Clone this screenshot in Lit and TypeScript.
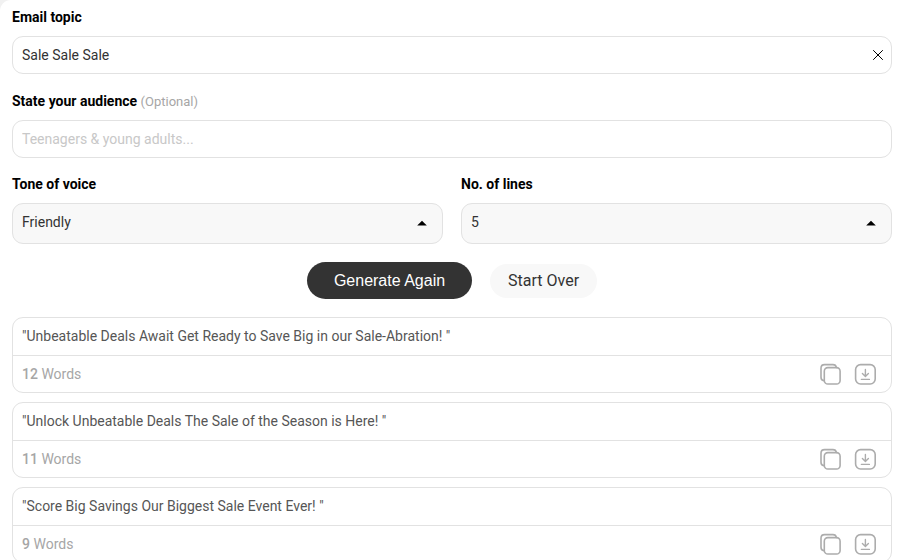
import { LitElement, html, css } from "lit";
import { customElement, property, state } from "lit/decorators.js";

@customElement("result-card")
class ResultCard extends LitElement {
  @property() text = "";
  @property({ type: Number }) words = 0;

  static styles = css`
    :host {
      display: block;
      border: 1px solid #e2e2e2;
      border-radius: 11px;
      background: #fff;
    }
    .text {
      margin: 0;
      padding: 8px 9px 9px;
      line-height: 20px;
      color: #565656;
      border-bottom: 1px solid #e2e2e2;
      white-space: pre-wrap;
    }
    .footer {
      display: flex;
      align-items: center;
      justify-content: space-between;
      height: 36px;
      padding: 0 14px 0 9px;
      color: #a6a6a6;
    }
    .count {
      font-weight: 500;
    }
    .actions {
      display: flex;
      gap: 12px;
    }
    .icon {
      display: block;
      width: 23px;
      height: 23px;
      padding: 0;
      border: 0;
      background: none;
      color: #acacac;
      cursor: pointer;
    }
    svg {
      display: block;
      fill: none;
      stroke: currentColor;
      stroke-width: 1.6;
      stroke-linecap: round;
      stroke-linejoin: round;
    }
  `;

  render() {
    return html`
      <p class="text">${this.text}</p>
      <div class="footer">
        <span><b class="count">${this.words}</b> Words</span>
        <div class="actions">
          <button class="icon" aria-label="Copy">
            <svg width="23" height="23" viewBox="0 0 23 23">
              <rect x="5.3" y="4.6" width="15.8" height="16.4" rx="3.6" />
              <path d="M4.8 17.6C2.9 17.4 2 16.5 2 14.2V5.2C2 2.7 3.2 1.6 5.6 1.6H14C16 1.6 17 2.6 17.4 4.4" />
            </svg>
          </button>
          <button class="icon" aria-label="Download">
            <svg width="23" height="23" viewBox="0 0 23 23">
              <rect x="1.6" y="1.6" width="19.6" height="19.4" rx="5" />
              <path d="M11.4 6.4V13.2M8.4 10.6L11.4 13.5L14.4 10.6M7.4 16.4H15.4" stroke-width="1.4" />
            </svg>
          </button>
        </div>
      </div>
    `;
  }
}

@customElement("app-root")
class AppRoot extends LitElement {
  @state() private topic = "Sale Sale Sale";

  private results = [
    { text: '"Unbeatable Deals Await Get Ready to Save Big in our Sale-Abration! "', words: 12 },
    { text: '"Unlock Unbeatable Deals The Sale of the Season is Here! "', words: 11 },
    { text: '"Score Big Savings Our Biggest Sale Event Ever! "', words: 9 },
  ];

  static styles = css`
    :host {
      display: block;
      background: #f1f1f1;
      font: 14px/20px Roboto, "Liberation Sans", sans-serif;
      color: #333;
    }
    * {
      box-sizing: border-box;
    }
    .panel {
      padding: 7px 6px 9px 12px;
      border-top-left-radius: 11px;
      background: #fff;
    }
    .field {
      margin-bottom: 17px;
    }
    .label {
      display: block;
      margin-bottom: 8px;
      line-height: 21px;
      font-weight: 700;
      color: #000;
    }
    .optional {
      font-size: 13px;
      font-weight: 400;
      color: #a6a6a6;
    }
    .control {
      position: relative;
    }
    .input,
    .select {
      display: block;
      width: 100%;
      margin: 0;
      border: 1px solid #e2e2e2;
      border-radius: 11px;
      font: inherit;
      color: #333;
      outline: none;
    }
    .input {
      height: 38px;
      padding: 0 36px 0 9px;
      background: #fff;
    }
    .input::placeholder {
      color: #c8c8c8;
      opacity: 1;
    }
    .select {
      height: 41px;
      padding: 0 36px 4px 9px;
      appearance: none;
      background: #f8f8f8;
    }
    .clear {
      position: absolute;
      top: 11px;
      right: 6px;
      width: 16px;
      height: 16px;
      padding: 0;
      border: 0;
      background: none;
      cursor: pointer;
    }
    .clear svg {
      display: block;
    }
    .caret {
      position: absolute;
      top: 17px;
      right: 16px;
      pointer-events: none;
    }
    .row {
      display: grid;
      grid-template-columns: 1fr 1fr;
      gap: 18px;
      margin-top: -1px;
    }
    .buttons {
      display: flex;
      align-items: center;
      justify-content: center;
      gap: 18px;
      margin: 18px 0;
    }
    .primary,
    .secondary {
      border: 0;
      border-radius: 19px;
      font-size: 16px;
      line-height: 20px;
      cursor: pointer;
    }
    .primary {
      height: 37px;
      padding: 0 27px;
      background: #333;
      color: #fff;
      font-family: "Liberation Sans", Arial, sans-serif;
    }
    .secondary {
      height: 34px;
      padding: 0 18px;
      background: #f8f8f8;
      color: #333;
      font-family: inherit;
    }
    .results {
      display: grid;
      gap: 9px;
    }
  `;

  private caret() {
    return html`<svg class="caret" width="10" height="6" viewBox="0 0 10 6" aria-hidden="true">
      <path d="M0.2 5.5L5 0.8L9.8 5.5Z" fill="#000" />
    </svg>`;
  }

  render() {
    return html`
      <div class="panel">
        <div class="field">
          <label class="label" for="topic">Email topic</label>
          <div class="control">
            <input
              class="input"
              id="topic"
              type="text"
              .value=${this.topic}
              @input=${(e: Event) => (this.topic = (e.target as HTMLInputElement).value)}
            />
            <button class="clear" aria-label="Clear" @click=${() => (this.topic = "")}>
              <svg width="16" height="16" viewBox="0 0 16 16">
                <path d="M3.2 3.2L12.8 12.8M12.8 3.2L3.2 12.8" stroke="#000" stroke-width="1" />
              </svg>
            </button>
          </div>
        </div>
        <div class="field">
          <label class="label" for="audience">State your audience <span class="optional">(Optional)</span></label>
          <input class="input" id="audience" type="text" placeholder="Teenagers &amp; young adults..." />
        </div>
        <div class="row">
          <div>
            <label class="label" for="tone">Tone of voice</label>
            <div class="control">
              <select class="select" id="tone">
                <option>Friendly</option>
              </select>
              ${this.caret()}
            </div>
          </div>
          <div>
            <label class="label" for="lines">No. of lines</label>
            <div class="control">
              <select class="select" id="lines">
                <option>5</option>
              </select>
              ${this.caret()}
            </div>
          </div>
        </div>
        <div class="buttons">
          <button class="primary">Generate Again</button>
          <button class="secondary">Start Over</button>
        </div>
        <div class="results">
          ${this.results.map((r) => html`<result-card .text=${r.text} .words=${r.words}></result-card>`)}
        </div>
      </div>
    `;
  }
}
